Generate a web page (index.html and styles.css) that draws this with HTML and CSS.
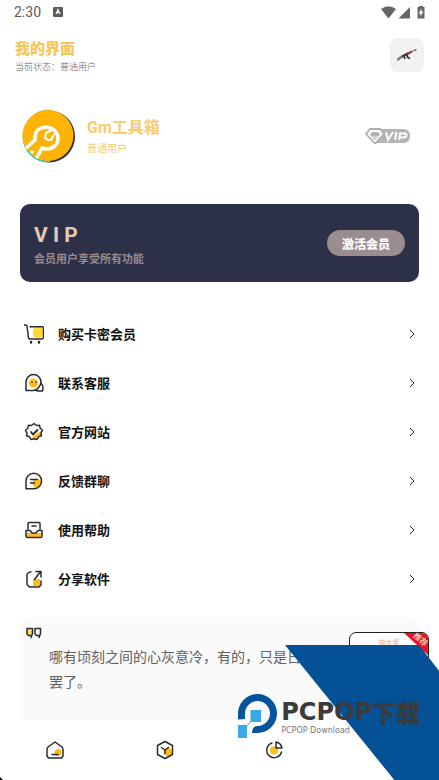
FILE: index.html
```html
<!DOCTYPE html>
<html lang="zh-CN">
<head>
<meta charset="utf-8">
<meta name="viewport" content="width=device-width, initial-scale=1">
<title>我的界面</title>
<link rel="stylesheet" href="styles.css">
</head>
<body>
<div class="page">
  <div class="status">
    <span>2:30</span>
    <svg class="status-app" width="10" height="10" viewBox="0 0 10 10"><rect width="10" height="10" rx="1" fill="#5c5c5c"/><path d="M3 7 5 2.500 7 7M3.800 5.600h2.400" fill="none" stroke="#fff" stroke-width="1.200"/></svg>
    <svg class="status-icons" width="44" height="13" viewBox="0 0 44 13" fill="#666"><path d="M0 3Q7.500-2.500 15 3L7.500 12.500Z"/><path d="M29 1v11.500H17.500Z"/><path d="M38 0h4v1h1.500v11.500h-7V1H38Z"/><path d="M40.500 2.500 37.500 7.500h2v3l3-5h-2Z" fill="#fff"/></svg>
  </div>

  <header class="header">
    <div>
      <h1>我的界面</h1>
      <p>当前状态：普通用户</p>
    </div>
    <button class="gun" type="button" aria-label="武器">
      <svg width="20" height="13" viewBox="0 0 20 13" fill="none"><path d="m0 11 6-4" stroke="#777c7a" stroke-width="2.500"/><path d="m5 7.500 7-3.500" stroke="#3b3033" stroke-width="2.200"/><path d="m10 5 5-2.500" stroke="#9b3a2c" stroke-width="2"/><path d="m14 3 5.500-2.500M18 0l1 2" stroke="#656565"/><path d="m7 7 1 3M10 6q0 3 3 3.500" stroke="#332d30" stroke-width="1.600"/></svg>
    </button>
  </header>

  <section class="profile">
    <svg class="avatar" width="54" height="54" viewBox="0 0 54 54">
      <defs><clipPath id="disc"><circle cx="26" cy="26.500" r="25.500"/></clipPath></defs>
      <circle cx="27" cy="27.500" r="26" fill="#282d30"/><path d="M.5 26A26 26 0 0 0 28 53.500V45L5 20ZM8 9Q18-1 30 1L20 6Z" fill="#27cbd0"/>
      <circle cx="26" cy="26.500" r="25.500" fill="#ffb405"/>
      <g clip-path="url(#disc)" fill="none" stroke="#fff" stroke-width="3.500" stroke-linejoin="round"><path d="m2 41 11-10q-1-9 6-12 7-2 12 1 6 5 5 11-2 9-12 9l-4-1-6 11"/><path d="m30 21-6 3-1 5 3 2h3l4-7" stroke-width="2"/><circle cx="10" cy="43" r="1.800" fill="#fff" stroke="none"/></g>
    </svg>
    <div class="who">
      <h2>Gm工具箱</h2>
      <p>普通用户</p>
    </div>
    <svg class="vip-tag" width="46" height="16" viewBox="0 0 46 16"><path d="M12 1h26q7 0 7 7t-7 7H10Z" fill="#b4b4b4"/><path d="M5 1h10l4 5-9 9.500L1 6Z" fill="#fff" stroke="#b0b0b0" stroke-width="1.800"/><path d="M7 4h6l2 2.500-5 5.500-5-5.500Z" fill="#b4b4b4"/><path d="m8 8 2 2 2-2" stroke="#fff" fill="none"/><path d="m21 4 2 8 5-8M31.500 4l-1.500 8M34 12l1-6.500h5q2 0 1.500 2t-3 2h-3.500" fill="none" stroke="#fff" stroke-width="2"/></svg>
  </section>

  <section class="vip">
    <div>
      <h2>V I P</h2>
      <p>会员用户享受所有功能</p>
    </div>
    <button type="button">激活会员</button>
  </section>

  <nav class="menu" aria-label="功能">
    <a href="#buy">
      <svg class="icon" width="20" height="20" viewBox="0 0 20 20"><rect x="9" y="3" width="10" height="11" rx="4" fill="#ffd936"/><path d="M0 1h2l1 1 1.500 12 1 1H18l1.500-1V3.500l-1-.8H6"/><path d="M7 18v.5M15 18v.5" stroke-width="2.500"/></svg>
      <span>购买卡密会员</span>
      <svg class="chevron" width="6" height="10" viewBox="0 0 6 10"><path d="m1 1 4 4-4 4"/></svg>
    </a>
    <a href="#service">
      <svg class="icon" width="20" height="20" viewBox="0 0 20 20"><circle cx="9.500" cy="10" r="4.500" fill="#ffbd16"/><path d="M2 17.500V9a7.500 7.500 0 0 1 15 0q0 3-2 5-2 3-5 3.500Z"/><path d="M17 10q3 3 1.500 8H14l-3-1"/><path d="M8 9v.3M12 9v.3"/></svg>
      <span>联系客服</span>
      <svg class="chevron" width="6" height="10" viewBox="0 0 6 10"><path d="m1 1 4 4-4 4"/></svg>
    </a>
    <a href="#site">
      <svg class="icon" width="20" height="20" viewBox="0 0 20 20"><path d="M17 9v5l-3 1-2 3-4-3Z" fill="#ffbd16"/><path d="m10 1.500 2.500 2 3-.2.700 3 2.300 2-1.500 2.500.5 3-3 1-1.500 2.700-3-.8-3 .8-1.500-2.700-3-1 .5-3L1.500 8.300l2.300-2 .7-3 3 .2Z"/><path d="m7 10 2 2.500L13.500 8" stroke-width="2"/></svg>
      <span>官方网站</span>
      <svg class="chevron" width="6" height="10" viewBox="0 0 6 10"><path d="m1 1 4 4-4 4"/></svg>
    </a>
    <a href="#feedback">
      <svg class="icon" width="20" height="20" viewBox="0 0 20 20"><circle cx="13" cy="12" r="4.500" fill="#ffbd16"/><path d="M2 17.800V10a7.800 7.800 0 1 1 7.800 7.800ZM6.500 8.500H13M6.500 12h4"/></svg>
      <span>反馈群聊</span>
      <svg class="chevron" width="6" height="10" viewBox="0 0 6 10"><path d="m1 1 4 4-4 4"/></svg>
    </a>
    <a href="#help">
      <svg class="icon" width="20" height="20" viewBox="0 0 20 20"><path d="M2 13h16v4H2Z" fill="#ffbd16"/><path d="M4 9V3.500Q4 2.500 5 2.500h10q1 0 1 1V9M8 6h4M2 10.500h4l2 2.500h4l2-2.500h4V16q0 1.500-1.500 1.500h-13Q2 17.500 2 16Z"/></svg>
      <span>使用帮助</span>
      <svg class="chevron" width="6" height="10" viewBox="0 0 6 10"><path d="m1 1 4 4-4 4"/></svg>
    </a>
    <a href="#share">
      <svg class="icon" width="20" height="20" viewBox="0 0 20 20"><path d="M9 10h7v7H9Z" fill="#ffbd16"/><path d="M7 3H5.500L3 5v10.500L5.500 18H15l2-2v-4M10.500 10.500l6-8M12 2.500h5V8"/></svg>
      <span>分享软件</span>
      <svg class="chevron" width="6" height="10" viewBox="0 0 6 10"><path d="m1 1 4 4-4 4"/></svg>
    </a>
  </nav>

  <section class="quote">
    <svg class="icon" width="16" height="12" viewBox="0 0 16 12"><path d="M1 2h5v6H1Z" fill="#ffdf6b"/><path d="M1 1.500h5.500v5L5 10.500M1 1.500V7l1.500 1.500h2.200M9 1.500h5.500v5L13 10.500M9 1.500V7l1.500 1.500h2.200"/></svg>
    <p>哪有顷刻之间的心灰意冷，有的，只是日积月累的看透罢了。</p>
  </section>

  <nav class="tabs" aria-label="主导航">
    <a href="#home" aria-label="首页"><svg class="icon" width="20" height="20" viewBox="0 0 20 20"><circle cx="13" cy="12.500" r="3.500" fill="#ffbd16"/><path d="M10 2 17 7l1 2v7l-1.500 2h-13L2 16V9l1-2ZM7 14.500h6"/></svg></a>
    <a href="#tools" aria-label="工具"><svg class="icon" width="20" height="20" viewBox="0 0 20 20"><circle cx="13" cy="12" r="4" fill="#ffbd16"/><path d="m10 1.500 7.500 4v9l-7.500 4-7.500-4v-9ZM6.500 7.500l3.500 2.500 3.500-2.500M10 10v3.500"/></svg></a>
    <a href="#me" aria-label="统计"><svg class="icon" width="20" height="20" viewBox="0 0 20 20"><circle cx="10" cy="10.500" r="4" fill="#ffbd16"/><path d="M8 3a7.500 7.500 0 1 0 9.500 9M12 2q5 1 6 6h-6Z"/></svg></a>
    <a href="#more" aria-label="更多"></a>
  </nav>

  <div class="promo">
    <span class="promo-title">抽大奖</span>
    <span class="ribbon"></span>
    <span class="ribbon-text">推荐</span>
  </div>
  <div class="slant"></div>
  <div class="brand">
    <svg width="40" height="44" viewBox="0 0 40 44"><path d="M0 25.500V19.500A19.500 19.500 0 1 1 19.500 39H14q0-7 5.500-7A12.500 12.500 0 1 0 7 19.500V25Z" fill="#04549d"/><path d="M12.500 16H23v12H13l-4 4v12H0V31h9l3.500-4Z" fill="#3ca8e6"/></svg>
    <div>
      <div class="brand-name">PCPOP<span>下载</span></div>
      <div class="brand-sub">PCPOP Download</div>
    </div>
  </div>
  <svg class="corner" width="3" height="3" viewBox="0 0 3 3"><path d="M0 0 3 3H0Z"/></svg>
</div>
</body>
</html>
```
FILE: styles.css
```css
* { box-sizing: border-box; }

body {
  margin: 0;
  background: #fff;
  color: #111;
  font-family: Roboto, "Noto Sans CJK SC", sans-serif;
}

h1, h2, p { margin: 0; }
a { color: inherit; text-decoration: none; }
button { border: 0; padding: 0; font: inherit; }
svg { display: block; flex: none; }

.page {
  position: relative;
  display: flex;
  flex-direction: column;
  min-height: 100vh;
  overflow: hidden;
}

.status {
  display: flex;
  align-items: center;
  height: 24px;
  padding: 0 14px;
  color: #5c5c5c;
  font-size: 14px;
}
.status-app { margin-left: 12px; }
.status-icons { margin-left: auto; }

.header {
  display: flex;
  justify-content: space-between;
  margin-top: 14px;
  padding: 0 15px;
}
.header h1 {
  color: #f6c75c;
  font-size: 15px;
  font-weight: 900;
  line-height: 22px;
}
.header p {
  color: #666;
  font-size: 9px;
  font-weight: 300;
  line-height: 14px;
}
.gun {
  display: grid;
  place-items: center;
  width: 34px;
  height: 34px;
  border-radius: 8px;
  background: #f2f2f2;
}

.profile {
  display: flex;
  align-items: center;
  height: 54px;
  margin-top: 35px;
  padding: 0 28px 0 22px;
}
.who {
  margin-left: 11px;
  padding-top: 4px;
}
.who h2 {
  color: #f6cc70;
  font-size: 16px;
  font-weight: 700;
  line-height: 22px;
}
.who p {
  color: #f6cc70;
  font-size: 10px;
  line-height: 20px;
}
.vip-tag { margin-left: auto; }

.vip {
  display: flex;
  align-items: center;
  justify-content: space-between;
  height: 78px;
  margin: 41px 20px 0;
  padding: 0 14px;
  border-radius: 10px;
  background: #2d3147;
}
.vip > div { padding-top: 4px; }
.vip h2 {
  color: #e6c9b3;
  font-size: 21px;
  line-height: 30px;
}
.vip p {
  color: #998b8d;
  font-size: 11px;
  font-weight: 700;
  line-height: 20px;
}
.vip button {
  width: 78px;
  height: 26px;
  border-radius: 13px;
  background: #998d8f;
  color: #fff;
  font-size: 12px;
  font-weight: 900;
}

.menu { margin-top: 27px; }
.menu a {
  display: flex;
  align-items: center;
  height: 49px;
  padding: 0 24px;
  font-size: 13px;
  font-weight: 700;
}
.menu span { margin-left: 14px; }
.icon {
  fill: none;
  stroke: #2c2c2c;
  stroke-width: 1.5;
  stroke-linejoin: round;
  stroke-linecap: round;
}
.icon [fill] { stroke: none; }
.chevron {
  margin-left: auto;
  fill: none;
  stroke: #222;
}

.quote {
  min-height: 103px;
  margin: 14px 20px 0;
  padding: 10px 30px 0 6px;
  border-radius: 10px;
  background: #fafafa;
}
.quote p {
  margin: 6px 0 0 23px;
  color: #606060;
  font-size: 14px;
  line-height: 25px;
}

.tabs {
  display: grid;
  grid-template-columns: repeat(4, 1fr);
  flex: 1;
  min-height: 60px;
}
.tabs a {
  display: grid;
  place-items: center;
}

/* Floating promotion and brand mark in the bottom right corner */
.promo {
  position: absolute;
  right: 10px;
  bottom: 98px;
  width: 80px;
  height: 50px;
  overflow: hidden;
  border: 1px solid #222;
  border-radius: 7px;
  background: #fff;
}
.promo-title {
  display: block;
  margin-top: 4px;
  color: #efa590;
  font-size: 7px;
  line-height: 12px;
  text-align: center;
}
.ribbon {
  position: absolute;
  top: 0;
  right: 0;
  width: 24px;
  height: 22px;
  background: #ec1024;
  clip-path: polygon(0 0, 100% 0, 100% 100%);
}
.ribbon-text {
  position: absolute;
  top: 2px;
  right: 0;
  color: #fff;
  font-size: 8px;
  line-height: 10px;
  transform: rotate(42deg);
}
.slant {
  position: absolute;
  right: 0;
  bottom: 0;
  width: 154px;
  height: 135px;
  background: #045196;
  clip-path: polygon(0 0, 87% 0, 100% 19%, 100% 100%, 71% 100%);
}
.brand {
  position: absolute;
  right: 19px;
  bottom: 42px;
  display: flex;
  align-items: flex-end;
  gap: 3px;
}
.brand > div { padding-bottom: 2px; }
.brand-name {
  display: flex;
  color: #3b3b3b;
  font: 700 24px/28px "DejaVu Sans", sans-serif;
  white-space: nowrap;
}
.brand-name span {
  font: 900 24px/28px "Noto Sans CJK SC", sans-serif;
}
.brand-sub {
  color: #777;
  font: 8px/10px "DejaVu Sans", sans-serif;
}
.corner {
  position: absolute;
  left: 0;
  bottom: 0;
}
```
